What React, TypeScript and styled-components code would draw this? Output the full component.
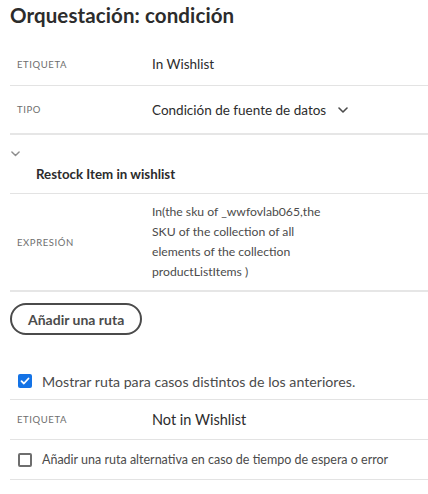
import React, { useState } from 'react';
import styled, { createGlobalStyle } from 'styled-components';

const GlobalStyle = createGlobalStyle`
  body {
    margin: 0;
    background: #fff;
    font-family: Lato, 'Noto Sans', sans-serif;
    color: #2c2c2c;
  }
`;

const Chevron = ({ size = 10, color = '#4b4b4b' }: { size?: number; color?: string }) => (
  <svg width={size} height={size * 0.6} viewBox='0 0 10 6' fill='none'>
    <path d='M1 1l4 4 4-4' stroke={color} strokeWidth='1.6' strokeLinecap='round' strokeLinejoin='round' />
  </svg>
);

const Check = () => (
  <svg width='10' height='8' viewBox='0 0 10 8' fill='none'>
    <path d='M1.5 4.2l2.4 2.3L8.5 1.5' stroke='#fff' strokeWidth='1.8' strokeLinecap='round' strokeLinejoin='round' />
  </svg>
);

const expressionLines = [
  'In(the sku of _wwfovlab065,the',
  'SKU of the collection of all',
  'elements of the collection',
  'productListItems )',
];

export default function App() {
  const [showElse, setShowElse] = useState(true);
  const [timeout, setTimeoutPath] = useState(false);

  return (
    <Panel>
      <GlobalStyle />
      <Title>Orquestación: condición</Title>

      <Row $height={42} $top={15}>
        <Label>Etiqueta</Label>
        <Value>In Wishlist</Value>
      </Row>
      <Row $height={47} $thick>
        <Label>Tipo</Label>
        <Value>
          <Picker>
            Condición de fuente de datos
            <Chevron />
          </Picker>
        </Value>
      </Row>

      <PathHeader>
        <Toggle>
          <Chevron size={9} color='#8e8e8e' />
        </Toggle>
        <PathName>Restock Item in wishlist</PathName>
      </PathHeader>

      <Row $height={96} $thick>
        <Label>Expresión</Label>
        <Expression>
          {expressionLines.map((line) => (
            <div key={line}>{line}</div>
          ))}
        </Expression>
      </Row>

      <ButtonArea>
        <PillButton>Añadir una ruta</PillButton>
      </ButtonArea>

      <CheckRow $height={36}>
        <Box $checked={showElse} onClick={() => setShowElse(!showElse)}>
          {showElse && <Check />}
        </Box>
        <CheckText $size={14.2}>Mostrar ruta para casos distintos de los anteriores.</CheckText>
      </CheckRow>
      <Row $height={39}>
        <Label>Etiqueta</Label>
        <Value $size={14.5}>Not in Wishlist</Value>
      </Row>
      <CheckRow $height={39}>
        <Box $checked={timeout} onClick={() => setTimeoutPath(!timeout)}>
          {timeout && <Check />}
        </Box>
        <CheckText $size={12.5}>Añadir una ruta alternativa en caso de tiempo de espera o error</CheckText>
      </CheckRow>
    </Panel>
  );
}

const Panel = styled.div`
  width: 428px;
  height: 494px;
  padding-left: 10px;
  box-sizing: border-box;
  overflow: hidden;
`;

const Title = styled.h1`
  margin: 0;
  padding-top: 3px;
  height: 25px;
  font-size: 20.5px;
  font-weight: 700;
  line-height: 25px;
  color: #2c2c2c;
  letter-spacing: 0.1px;
`;

const Row = styled.div<{ $height: number; $thick?: boolean; $top?: number }>`
  display: grid;
  grid-template-columns: 135px 1fr;
  align-items: center;
  height: ${(p) => p.$height}px;
  margin-top: ${(p) => p.$top || 0}px;
  padding-left: 7px;
  border-bottom: ${(p) => (p.$thick ? '2px solid #e6e6e6' : '1px solid #e3e3e3')};
`;

const Label = styled.div`
  font-size: 9.5px;
  text-transform: uppercase;
  letter-spacing: 0.6px;
  color: #6e6e6e;
`;

const Value = styled.div<{ $size?: number }>`
  font-size: ${(p) => p.$size || 13.5}px;
  color: #2c2c2c;
`;

const Picker = styled.span`
  display: inline-flex;
  align-items: center;
  gap: 12px;
`;

const PathHeader = styled.div`
  height: 58px;
  border-bottom: 1px solid #e3e3e3;
  display: flex;
  flex-direction: column;
`;

const Toggle = styled.div`
  padding: 13px 0 0 1px;
  height: 12px;
  display: flex;
  align-items: center;
`;

const PathName = styled.div`
  padding: 6px 0 0 26px;
  font-size: 13.3px;
  font-weight: 700;
  color: #2c2c2c;
`;

const Expression = styled.div`
  font-size: 12.2px;
  line-height: 20px;
  color: #4b4b4b;
  white-space: nowrap;
`;

const ButtonArea = styled.div`
  padding-top: 11px;
  height: 71px;
  box-sizing: border-box;
`;

const PillButton = styled.button`
  height: 32px;
  padding: 0 16px;
  border: 2px solid #4b4b4b;
  border-radius: 16px;
  background: #fff;
  font-family: Lato, 'Noto Sans', sans-serif;
  font-size: 14px;
  font-weight: 700;
  color: #4b4b4b;
`;

const CheckRow = styled.div<{ $height: number }>`
  display: flex;
  align-items: center;
  gap: 10px;
  height: ${(p) => p.$height}px;
  padding-left: 8px;
  border-bottom: 1px solid #e3e3e3;
`;

const Box = styled.div<{ $checked: boolean }>`
  width: 14px;
  height: 14px;
  box-sizing: border-box;
  border-radius: 2px;
  display: flex;
  align-items: center;
  justify-content: center;
  background: ${(p) => (p.$checked ? '#1473e6' : '#fff')};
  border: ${(p) => (p.$checked ? 'none' : '2px solid #6e6e6e')};
  cursor: pointer;
`;

const CheckText = styled.div<{ $size: number }>`
  font-size: ${(p) => p.$size}px;
  color: #4b4b4b;
`;
